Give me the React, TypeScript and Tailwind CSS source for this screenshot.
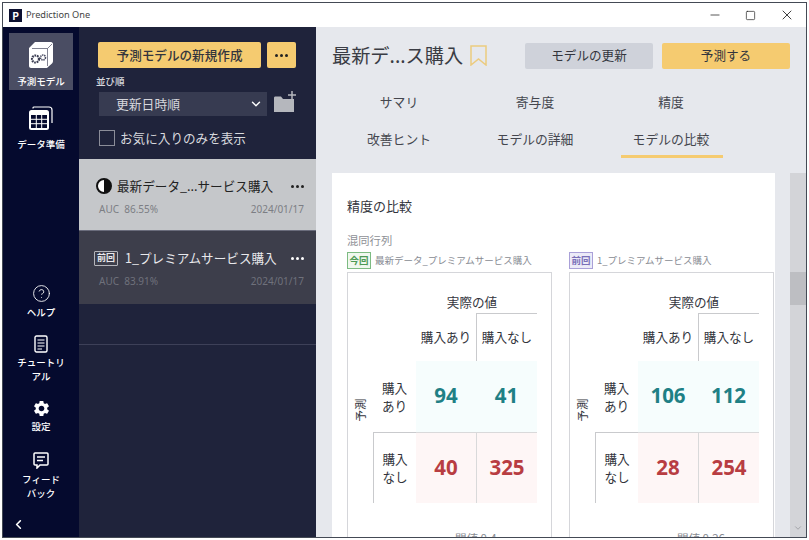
import { ChevronDown, ChevronLeft, HelpCircle, Minus, Square, X } from 'lucide-react';
import { MdSettings } from 'react-icons/md';

const jp = "font-['Noto_Sans_CJK_JP','Noto_Sans',sans-serif]";

const NavItem = ({
  icon,
  label,
  active,
  className = '',
}: {
  icon: React.ReactNode;
  label: React.ReactNode;
  active?: boolean;
  className?: string;
}) => (
  <div
    className={`mx-[6px] flex w-[64px] flex-col items-center text-center text-[9.5px] leading-[14px] font-medium text-white ${active ? 'bg-[#4a4d63]' : ''} ${className}`}
  >
    {icon}
    <div>{label}</div>
  </div>
);

const ModelIcon = () => (
  <svg width="24" height="26" viewBox="0 0 24 26" className="mt-[9px] mb-[6px]">
    <path d="M6 0H22C23 0 24 1 24 2V19C24 20 23.500 21 23 21.500L19 25C18.500 25.700 18 26 17 26H2C1 26 0 25 0 24V6Z" fill="#fff" />
    <path d="M3 6.500H18.500V24M18.500 6.500L23 2" fill="none" stroke="#4a4d63" strokeWidth="0.700" />
    <circle cx="6.500" cy="17" r="3.500" fill="none" stroke="#3a3d52" strokeWidth="2.200" strokeDasharray="1.700 0.800" />
    <circle cx="14" cy="15.500" r="2.500" fill="none" stroke="#4a4d63" strokeWidth="1.600" strokeDasharray="1.400 0.700" />
  </svg>
);

const TableIcon = () => (
  <svg width="24" height="24" viewBox="0 0 24 24" className="mt-[16px] mb-[7px]">
    <path d="M4 2.500V2C4 1.300 4.500 1 5 1H20C22 1 23 2 23 4V17" fill="none" stroke="#fff" strokeWidth="1.200" />
    <rect x="0" y="4" width="20" height="20" rx="2.500" fill="#fff" />
    <path d="M2 9H18V22H2Z" fill="#050a2e" />
    <path d="M2 13.300H18M2 17.700H18M7.300 9V22M12.700 9V22" fill="none" stroke="#fff" strokeWidth="1" />
  </svg>
);

const DocIcon = () => (
  <svg width="14" height="18" viewBox="0 0 14 18" className="mb-[2px]">
    <rect x="1" y="1" width="12" height="16" rx="1.500" fill="none" stroke="#fff" strokeWidth="1.400" />
    <path d="M3.500 5H10.500M3.500 8H10.500M3.500 11H10.500M3.500 14H8" stroke="#fff" strokeWidth="1.200" />
  </svg>
);

const CommentIcon = () => (
  <svg width="16" height="17" viewBox="0 0 16 17" className="mb-[3px]">
    <path
      d="M2 1H14C14.600 1 15 1.400 15 2V12C15 12.600 14.600 13 14 13H7L4 16V13H2C1.400 13 1 12.600 1 12V2C1 1.400 1.400 1 2 1Z"
      fill="none"
      stroke="#fff"
      strokeWidth="1.500"
    />
    <path d="M4 5H12M4 8.500H10" stroke="#fff" strokeWidth="1.400" />
  </svg>
);

const Dots = ({ className = '' }: { className?: string }) => (
  <div className={`flex gap-[2px] ${className}`}>
    <span className="h-[3px] w-[3px] rounded-full bg-current" />
    <span className="h-[3px] w-[3px] rounded-full bg-current" />
    <span className="h-[3px] w-[3px] rounded-full bg-current" />
  </div>
);

const numberClass = "flex w-[60px] items-center justify-center pb-[2px] font-['Noto_Sans',sans-serif] text-[20.5px] font-bold";

const Matrix = ({
  tag,
  tagClass,
  name,
  values,
  threshold,
}: {
  tag: string;
  tagClass: string;
  name: string;
  values: number[];
  threshold: string;
}) => (
  <div className="w-[205px] shrink-0">
    <div className="flex h-[17px] items-center gap-[4px]">
      <span className={`flex h-[17px] w-[24px] items-center justify-center border text-[9.5px] font-bold ${tagClass}`}>
        {tag}
      </span>
      <span className="text-[9.5px] whitespace-nowrap text-[#888b93]">{name}</span>
    </div>
    <div className="mt-[3px] h-[300px] border border-[#d5d6da] pt-[18px] pl-[25px] text-[#33353d]">
      <div className="flex">
        <div className="w-[43px]" />
        <div className="w-[112px] text-center text-[12.6px] leading-[22px]">実際の値</div>
      </div>
      <div className="flex h-[48px] text-[12.6px]">
        <div className="w-[43px]" />
        <div className="flex w-[60px] items-center justify-center whitespace-nowrap">購入あり</div>
        <div className="flex w-[61px] items-center justify-center border-t border-l border-[#c9cacd] whitespace-nowrap">
          購入なし
        </div>
      </div>
      <div className="flex h-[71px]">
        <div className="relative flex w-[43px] items-center justify-center text-[12.6px] leading-[18px]">
          <span className="absolute top-[41px] left-[-25px] w-[24px] -rotate-90 text-center text-[11.5px] leading-[16px] whitespace-nowrap">
            予測
          </span>
          <div className="text-center">
            購入
            <br />
            あり
          </div>
        </div>
        <div className={`${numberClass} bg-[#f6fdfd] text-[#1f8085]`}>{values[0]}</div>
        <div className={`${numberClass} w-[61px] bg-[#f6fdfd] text-[#1f8085]`}>{values[1]}</div>
      </div>
      <div className="flex h-[71px]">
        <div className="flex w-[43px] items-center justify-center border-t border-l border-[#c9cacd] text-center text-[12.6px] leading-[18px]">
          <div>
            購入
            <br />
            なし
          </div>
        </div>
        <div className={`${numberClass} border-t border-[#d9d9da] bg-[#fef6f6] text-[#b83d42]`}>{values[2]}</div>
        <div className={`${numberClass} w-[61px] border-t border-l border-[#d9d9da] bg-[#fef6f6] text-[#b83d42]`}>
          {values[3]}
        </div>
      </div>
      <div className="mt-[27px] ml-[82px] text-[11.5px] whitespace-nowrap text-[#888b93]">閾値 {threshold}</div>
    </div>
  </div>
);

export default function App() {
  return (
    <div className={`h-[540px] w-[809px] overflow-hidden bg-white p-[2px] ${jp}`}>
      <div className="flex h-[536px] flex-col overflow-hidden border border-[#444a55]">
        <div className="flex h-[24px] shrink-0 items-center bg-white pl-[6px] text-[#444]">
          <div className="flex h-[13px] w-[13px] items-center justify-center bg-[#0c1030] text-[10px] font-bold text-white">
            P
          </div>
          <span className="ml-[4px] font-['Noto_Sans',sans-serif] text-[9.2px]">Prediction One</span>
          <div className="ml-auto flex items-center text-[#222]">
            <Minus size={14} strokeWidth={1.300} className="mr-[23px]" />
            <Square size={11} strokeWidth={1.500} className="mr-[23px]" />
            <X size={16} strokeWidth={1.300} className="mr-[11px]" />
          </div>
        </div>
        <div className="flex min-h-0 flex-1">
          <div className="flex w-[76px] shrink-0 flex-col bg-[#050a2e]">
            <NavItem active icon={<ModelIcon />} label="予測モデル" className="mt-[6px] h-[57px]" />
            <NavItem icon={<TableIcon />} label="データ準備" />
            <div className="mt-auto">
              <NavItem icon={<HelpCircle size={19} strokeWidth={1.100} className="mb-[2px]" />} label="ヘルプ" />
              <NavItem className="mt-[16px]" icon={<DocIcon />} label={<>チュートリ<br />アル</>} />
              <NavItem className="mt-[16px]" icon={<MdSettings size={19} className="mb-[1px]" />} label="設定" />
              <NavItem className="mt-[19px]" icon={<CommentIcon />} label={<>フィード<br />バック</>} />
              <ChevronLeft size={15} strokeWidth={2.600} className="mt-[17px] mb-[5px] ml-[8px] text-white" />
            </div>
          </div>

          <div className="flex w-[237px] shrink-0 flex-col bg-[#1f233b]">
            <div className="h-[132px] shrink-0 pt-[15px] pr-[19px] pl-[19px]">
              <div className="flex gap-[6px]">
                <div className="flex h-[26px] w-[163px] items-center justify-center rounded-[2px] bg-[#f5cb70] text-[12.6px] font-medium text-[#33353d]">
                  予測モデルの新規作成
                </div>
                <div className="flex h-[26px] w-[29px] items-center justify-center rounded-[2px] bg-[#f5cb70] text-[#222]">
                  <Dots />
                </div>
              </div>
              <div className="mt-[5px] ml-[-2px] text-[9.500px] leading-[16px] font-medium text-[#d8d9de]">並び順</div>
              <div className="mt-[3px] ml-[1px] flex items-center">
                <div className="flex h-[24px] w-[168px] items-center justify-between bg-[#373b51] pr-[4px] pl-[17px] text-[12.8px] text-[#d5d6dc]">
                  更新日時順
                  <ChevronDown size={14} strokeWidth={2.400} className="text-white" />
                </div>
                <svg width="24" height="22" viewBox="0 0 24 22" className="mt-[-4px] ml-[6px]">
                  <path d="M1 7C1 6 1.500 5.500 2.500 5.500H8L10 8H21V21H1Z" fill="#b5b7bd" />
                  <path d="M19 0V8M15 4H23" stroke="#b5b7bd" strokeWidth="1.500" />
                </svg>
              </div>
              <div className="mt-[13px] ml-[1px] flex items-center gap-[5px] text-[12.6px] text-[#d8d9de]">
                <div className="h-[16px] w-[16px] border border-[#8b8d99]" />
                お気に入りのみを表示
              </div>
            </div>
            <div className="h-[72px] shrink-0 border-b border-[#6a6c7c] bg-[#c5c7ca] pt-[18px] pr-[12px] pl-[17px]">
              <div className="flex h-[18px] items-center text-[12.6px] whitespace-nowrap text-[#222]">
                <div className="h-[16px] w-[16px] rounded-full border-2 border-[#111] bg-[linear-gradient(90deg,#fff_50%,#111_50%)]" />
                <span className="ml-[5px]">最新データ_...サービス購入</span>
                <Dots className="ml-auto text-[#222]" />
              </div>
              <div className="mt-[7px] flex justify-between pl-[3px] font-['Noto_Sans',sans-serif] text-[10px] text-[#7c7e84]">
                <span>AUC&nbsp; 86.55%</span>
                <span>2024/01/17</span>
              </div>
            </div>
            <div className="h-[73px] shrink-0 bg-[#3d3e4b] pt-[18px] pr-[12px] pl-[15px]">
              <div className="flex h-[18px] items-center text-[12.6px] whitespace-nowrap text-[#e8e8ec]">
                <span className="flex h-[15px] w-[24px] items-center justify-center rounded-[1px] border border-[#b5b6bc] text-[9px] font-bold">
                  前回
                </span>
                <span className="ml-[7px]">1_プレミアムサービス購入</span>
                <Dots className="ml-auto text-white" />
              </div>
              <div className="mt-[7px] flex justify-between pl-[5px] font-['Noto_Sans',sans-serif] text-[10px] text-[#6f717b]">
                <span>AUC&nbsp; 83.91%</span>
                <span>2024/01/17</span>
              </div>
            </div>
            <div className="h-[41px] shrink-0 border-b border-[#3d4058]" />
          </div>

          <div className="flex min-w-0 flex-1 flex-col bg-[#e6e8ed]">
            <div className="flex h-[56px] shrink-0 items-center pt-[1px] pr-[16px] pl-[16px]">
              <span className="text-[19.2px] text-[#3a3c44]">最新デ...ス購入</span>
              <svg width="17" height="21" viewBox="0 0 17 21" className="ml-[7px]">
                <path d="M1 1H16V20L8.500 14L1 20Z" fill="none" stroke="#eccb7f" strokeWidth="1.500" />
              </svg>
              <div className="ml-auto flex gap-[9px] text-[12.6px]">
                <div className="flex h-[26px] w-[128px] items-center justify-center rounded-[2px] bg-[#cfd2da] text-[#33353d]">
                  モデルの更新
                </div>
                <div className="flex h-[26px] w-[128px] items-center justify-center rounded-[2px] bg-[#f5cb70] text-[#33353d]">
                  予測する
                </div>
              </div>
            </div>
            <div className="grid w-[423px] shrink-0 grid-cols-3 pl-[15px] text-center text-[12.8px] leading-[37px] text-[#44464e]">
              {['サマリ', '寄与度', '精度', '改善ヒント', 'モデルの詳細'].map((tab) => (
                <div key={tab}>{tab}</div>
              ))}
              <div className="relative">
                モデルの比較
                <div className="absolute top-[35px] left-[18px] h-[3px] w-[102px] bg-[#f5cb70]" />
              </div>
            </div>
            <div className="mt-[16px] flex min-h-0 flex-1 overflow-hidden">
              <div className="ml-[16px] w-[443px] shrink-0 bg-white pt-[23px] pl-[15px]">
                <div className="text-[13px] leading-[20px] text-[#33353d]">精度の比較</div>
                <div className="mt-[16px] text-[11.300px] leading-[16px] text-[#8e9096]">混同行列</div>
                <div className="mt-[4px] flex gap-[17px]">
                  <Matrix
                    tag="今回"
                    tagClass="border-[#7dbb82] bg-[#f0f8ef] text-[#4d9a55]"
                    name="最新データ_プレミアムサービス購入"
                    values={[94, 41, 40, 325]}
                    threshold="0.4"
                  />
                  <Matrix
                    tag="前回"
                    tagClass="border-[#a9a0d8] bg-[#ecebf8] text-[#7a70b8]"
                    name="1_プレミアムサービス購入"
                    values={[106, 112, 28, 254]}
                    threshold="0.26"
                  />
                </div>
              </div>
              <div className="ml-auto flex w-[16px] shrink-0 flex-col items-center bg-[#d3d4d8]">
                <div className="mt-[99px] h-[33px] w-full bg-[#bdbec2]" />
                <ChevronDown size={10} className="mt-auto mb-[4px] text-[#9a9ba0]" />
              </div>
            </div>
          </div>
        </div>
      </div>
    </div>
  );
}
